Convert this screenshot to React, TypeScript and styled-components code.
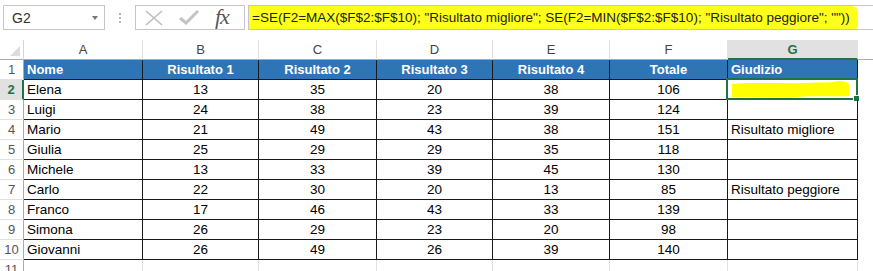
import React from "react";
import styled, { createGlobalStyle } from "styled-components";

const Global = createGlobalStyle`
  html, body { margin: 0; padding: 0; background: #fff; }
  body { font-family: "Liberation Sans", Arial, sans-serif; }
  #root { width: 873px; height: 271px; overflow: hidden; }
`;

const Page = styled.div`
  width: 873px;
  height: 271px;
  overflow: hidden;
  background: #fff;
  display: flex;
  flex-direction: column;
`;

const Toolbar = styled.div`
  display: flex;
  align-items: stretch;
  height: 40px;
  padding: 5px 0 10px 3px;
  box-sizing: border-box;
`;

const NameBox = styled.div`
  width: 102px;
  border: 1px solid #c6c6c6;
  box-sizing: border-box;
  display: flex;
  align-items: center;
  justify-content: space-between;
  padding: 0 6px 0 8px;
  font-size: 14px;
  color: #333;
`;

const Arrow = styled.span`
  width: 0;
  height: 0;
  border-left: 3.5px solid transparent;
  border-right: 3.5px solid transparent;
  border-top: 4px solid #777;
`;

const Dots = styled.div`
  width: 30px;
  display: flex;
  flex-direction: column;
  align-items: center;
  justify-content: center;
  gap: 2px;
  span {
    width: 2px;
    height: 2px;
    background: #b4b4b4;
  }
`;

const FuncBox = styled.div`
  width: 110px;
  border: 1px solid #c6c6c6;
  box-sizing: border-box;
  display: flex;
  align-items: center;
  padding: 0 0 0 9px;
  gap: 16px;
`;

const Fx = styled.span`
  font-family: "Liberation Serif", "Times New Roman", serif;
  font-style: italic;
  font-size: 22px;
  color: #555;
  letter-spacing: -1px;
  margin-top: -2px;
`;

const FormulaBar = styled.div`
  flex: 1;
  margin-left: 3px;
  border-top: 1px solid #c6c6c6;
  border-bottom: 1px solid #c6c6c6;
  border-left: 1px solid #c6c6c6;
  box-sizing: border-box;
  display: flex;
  align-items: center;
  white-space: nowrap;
  overflow: hidden;
`;

const Highlight = styled.span`
  background: #ffff1e;
  font-size: 13.5px;
  color: #222;
  padding: 4px 8px 4px 3px;
  border-radius: 0 6px 3px 0;
`;

const Sheet = styled.div`
  display: grid;
  grid-template-columns: 24px 119px 116px 118px 116px 117px 118px 130px 1fr;
  grid-template-rows: 20px repeat(10, 20px) 20px;
`;

type CellProps = {
  $kind: "corner" | "colhead" | "rowhead" | "head" | "data" | "empty" | "filler" | "fillerhead";
  $align?: "left" | "center";
  $active?: boolean;
};

const Cell = styled.div<CellProps>`
  position: relative;
  box-sizing: border-box;
  display: flex;
  align-items: center;
  white-space: nowrap;
  font-size: 13.5px;
  color: #000;
  justify-content: ${(p) => (p.$align === "left" ? "flex-start" : "center")};
  padding-left: ${(p) => (p.$align === "left" ? "3px" : "0")};
  ${(p) => {
    switch (p.$kind) {
      case "corner":
        return `border-right: 1px solid #d4d4d4; border-bottom: 1px solid #ababab;`;
      case "colhead":
        return `
          border-right: 1px solid #e1e1e1;
          border-bottom: ${p.$active ? "2px solid #217346" : "1px solid #ababab"};
          background: ${p.$active ? "#e1e1e1" : "#fff"};
          color: ${p.$active ? "#217346" : "#444"};
          font-weight: ${p.$active ? "bold" : "normal"};
          font-size: 13px;
        `;
      case "fillerhead":
        return `border-bottom: 1px solid #ababab;`;
      case "rowhead":
        return `
          border-right: ${p.$active ? "2px solid #217346" : "1px solid #ababab"};
          border-bottom: 1px solid #e1e1e1;
          color: ${p.$active ? "#217346" : "#555"};
          font-weight: ${p.$active ? "bold" : "normal"};
          background: ${p.$active ? "#e1e1e1" : "#fff"};
          font-size: 13px;
        `;
      case "head":
        return `
          background: #2f75b5;
          color: #fff;
          font-weight: bold;
          font-size: 13px;
          border-right: 1px solid #1a1a1a;
          border-bottom: 1px solid #1a1a1a;
        `;
      case "data":
        return `border-right: 1px solid #1a1a1a; border-bottom: 1px solid #1a1a1a;`;
      case "empty":
        return `border-right: 1px solid #e1e1e1; border-bottom: 1px solid #e1e1e1;`;
      default:
        return ``;
    }
  }}
`;

const Selection = styled.div`
  position: absolute;
  left: -2px;
  top: -2px;
  right: -1px;
  bottom: -1px;
  border: 2px solid #217346;
  pointer-events: none;
  &::after {
    content: "";
    position: absolute;
    right: -4px;
    bottom: -4px;
    width: 5px;
    height: 5px;
    background: #217346;
    border: 1px solid #fff;
  }
`;

const Marker = styled.svg`
  position: absolute;
  left: 3px;
  top: 1px;
`;

const CornerTri = styled.svg`
  position: absolute;
  right: 3px;
  bottom: 3px;
`;

const headers = ["Nome", "Risultato 1", "Risultato 2", "Risultato 3", "Risultato 4", "Totale", "Giudizio"];

const rows: [string, number, number, number, number, number, string][] = [
  ["Elena", 13, 35, 20, 38, 106, ""],
  ["Luigi", 24, 38, 23, 39, 124, ""],
  ["Mario", 21, 49, 43, 38, 151, "Risultato migliore"],
  ["Giulia", 25, 29, 29, 35, 118, ""],
  ["Michele", 13, 33, 39, 45, 130, ""],
  ["Carlo", 22, 30, 20, 13, 85, "Risultato peggiore"],
  ["Franco", 17, 46, 43, 33, 139, ""],
  ["Simona", 26, 29, 23, 20, 98, ""],
  ["Giovanni", 26, 49, 26, 39, 140, ""],
];

const letters = ["A", "B", "C", "D", "E", "F", "G"];

export default function App() {
  return (
    <Page>
      <Global />
      <Toolbar>
        <NameBox>
          <span>G2</span>
          <Arrow />
        </NameBox>
        <Dots>
          <span />
          <span />
          <span />
        </Dots>
        <FuncBox>
          <svg width="18" height="16" viewBox="0 0 18 16">
            <path d="M1 1 L17 15 M17 1 L1 15" stroke="#bdbdbd" strokeWidth="1.6" fill="none" />
          </svg>
          <svg width="20" height="15" viewBox="0 0 20 15">
            <path d="M1 8 L7 13 L19 1" stroke="#c4c4c4" strokeWidth="3" fill="none" />
          </svg>
          <Fx>fx</Fx>
        </FuncBox>
        <FormulaBar>
          <Highlight>
            =SE(F2=MAX($F$2:$F$10); "Risultato migliore"; SE(F2=MIN($F$2:$F$10); "Risultato peggiore"; ""))
          </Highlight>
        </FormulaBar>
      </Toolbar>
      <Sheet>
        <Cell $kind="corner">
          <CornerTri width="10" height="10" viewBox="0 0 10 10">
            <path d="M10 0 L10 10 L0 10 Z" fill="#dcdcdc" />
          </CornerTri>
        </Cell>
        {letters.map((l) => (
          <Cell key={l} $kind="colhead" $active={l === "G"}>
            {l}
          </Cell>
        ))}
        <Cell $kind="fillerhead" />

        <Cell $kind="rowhead">1</Cell>
        {headers.map((h, i) => (
          <Cell key={h} $kind="head" $align={i === 0 || i === 6 ? "left" : "center"}>
            {h}
          </Cell>
        ))}
        <Cell $kind="filler" />

        {rows.map((r, ri) => (
          <React.Fragment key={r[0]}>
            <Cell $kind="rowhead" $active={ri === 0}>
              {ri + 2}
            </Cell>
            {r.map((v, ci) => (
              <Cell key={ci} $kind="data" $align={ci === 0 || ci === 6 ? "left" : "center"}>
                {v}
                {ri === 0 && ci === 6 && (
                  <>
                    <Marker width="120" height="17" viewBox="0 0 120 17">
                      <path
                        d="M1 3 C20 1 50 3 75 2 C90 1 100 2 104 0.5 C110 0 116 0.5 118 3 L118 15 C100 16 80 14 60 16.5 C40 17 20 15.5 1 16 Z"
                        fill="#ffff00"
                      />
                    </Marker>
                    <Selection />
                  </>
                )}
              </Cell>
            ))}
            <Cell $kind="filler" />
          </React.Fragment>
        ))}

        <Cell $kind="rowhead">11</Cell>
        {letters.map((l) => (
          <Cell key={"e" + l} $kind="empty" />
        ))}
        <Cell $kind="filler" />
      </Sheet>
    </Page>
  );
}
